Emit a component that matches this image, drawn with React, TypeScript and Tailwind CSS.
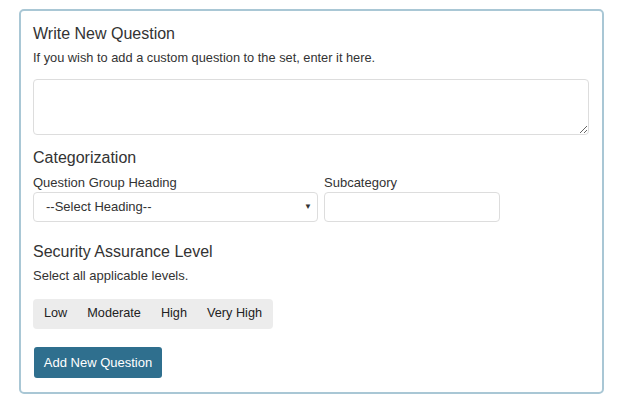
import React from 'react';

const levels = ['Low', 'Moderate', 'High', 'Very High'];

const App: React.FC = () => {
  return (
    <div className="min-h-screen bg-white pt-[9px] pl-[19px] font-['Liberation_Sans',Arial,sans-serif] text-[#333]">
      <div className="w-[585px] rounded-[5px] border-2 border-[#a9c7d5] px-[12px] pt-[12px] pb-[14px]">
        {/* Write New Question */}
        <h2 className="text-[16px] leading-[22px]">Write New Question</h2>
        <p className="mt-[4px] text-[12.8px] leading-[18px]">
          If you wish to add a custom question to the set, enter it here.
        </p>
        <textarea className="mt-[12px] block h-[56px] w-[556px] rounded-[4px] border border-[#ddd] px-3 py-1.5 text-sm outline-none" />

        {/* Categorization */}
        <h3 className="mt-[12px] text-[16px] leading-[22px]">Categorization</h3>
        <div className="mt-[5px] flex gap-[6px]">
          <div className="flex flex-col">
            <label className="text-[13px] leading-[18px]">Question Group Heading</label>
            <div className="relative flex h-[30px] w-[285px] items-center rounded-[4px] border border-[#ddd] pl-[12px] pr-[5px]">
              <span className="flex-1 text-[13px]">--Select Heading--</span>
              <span className="text-[8px] text-[#333]">▼</span>
            </div>
          </div>
          <div className="flex flex-col">
            <label className="text-[13px] leading-[18px]">Subcategory</label>
            <input className="h-[30px] w-[176px] rounded-[4px] border border-[#ddd] px-2 text-sm outline-none" />
          </div>
        </div>

        {/* Security Assurance Level */}
        <h3 className="mt-[19px] text-[16px] leading-[22px]">Security Assurance Level</h3>
        <p className="mt-[4px] text-[13px] leading-[18px]">Select all applicable levels.</p>
        <div className="mt-[14px] inline-flex h-[30px] items-center rounded-[4px] bg-[#ececec] px-[1px]">
          {levels.map((l) => (
            <button key={l} className="px-[10px] text-[12.7px] text-[#222]">
              {l}
            </button>
          ))}
        </div>

        <div className="mt-[18px]">
          <button className="ml-[1px] h-[31px] w-[128px] rounded-[3px] bg-[#2f6f8e] text-[13px] text-white">
            Add New Question
          </button>
        </div>
      </div>
    </div>
  );
};

export default App;
